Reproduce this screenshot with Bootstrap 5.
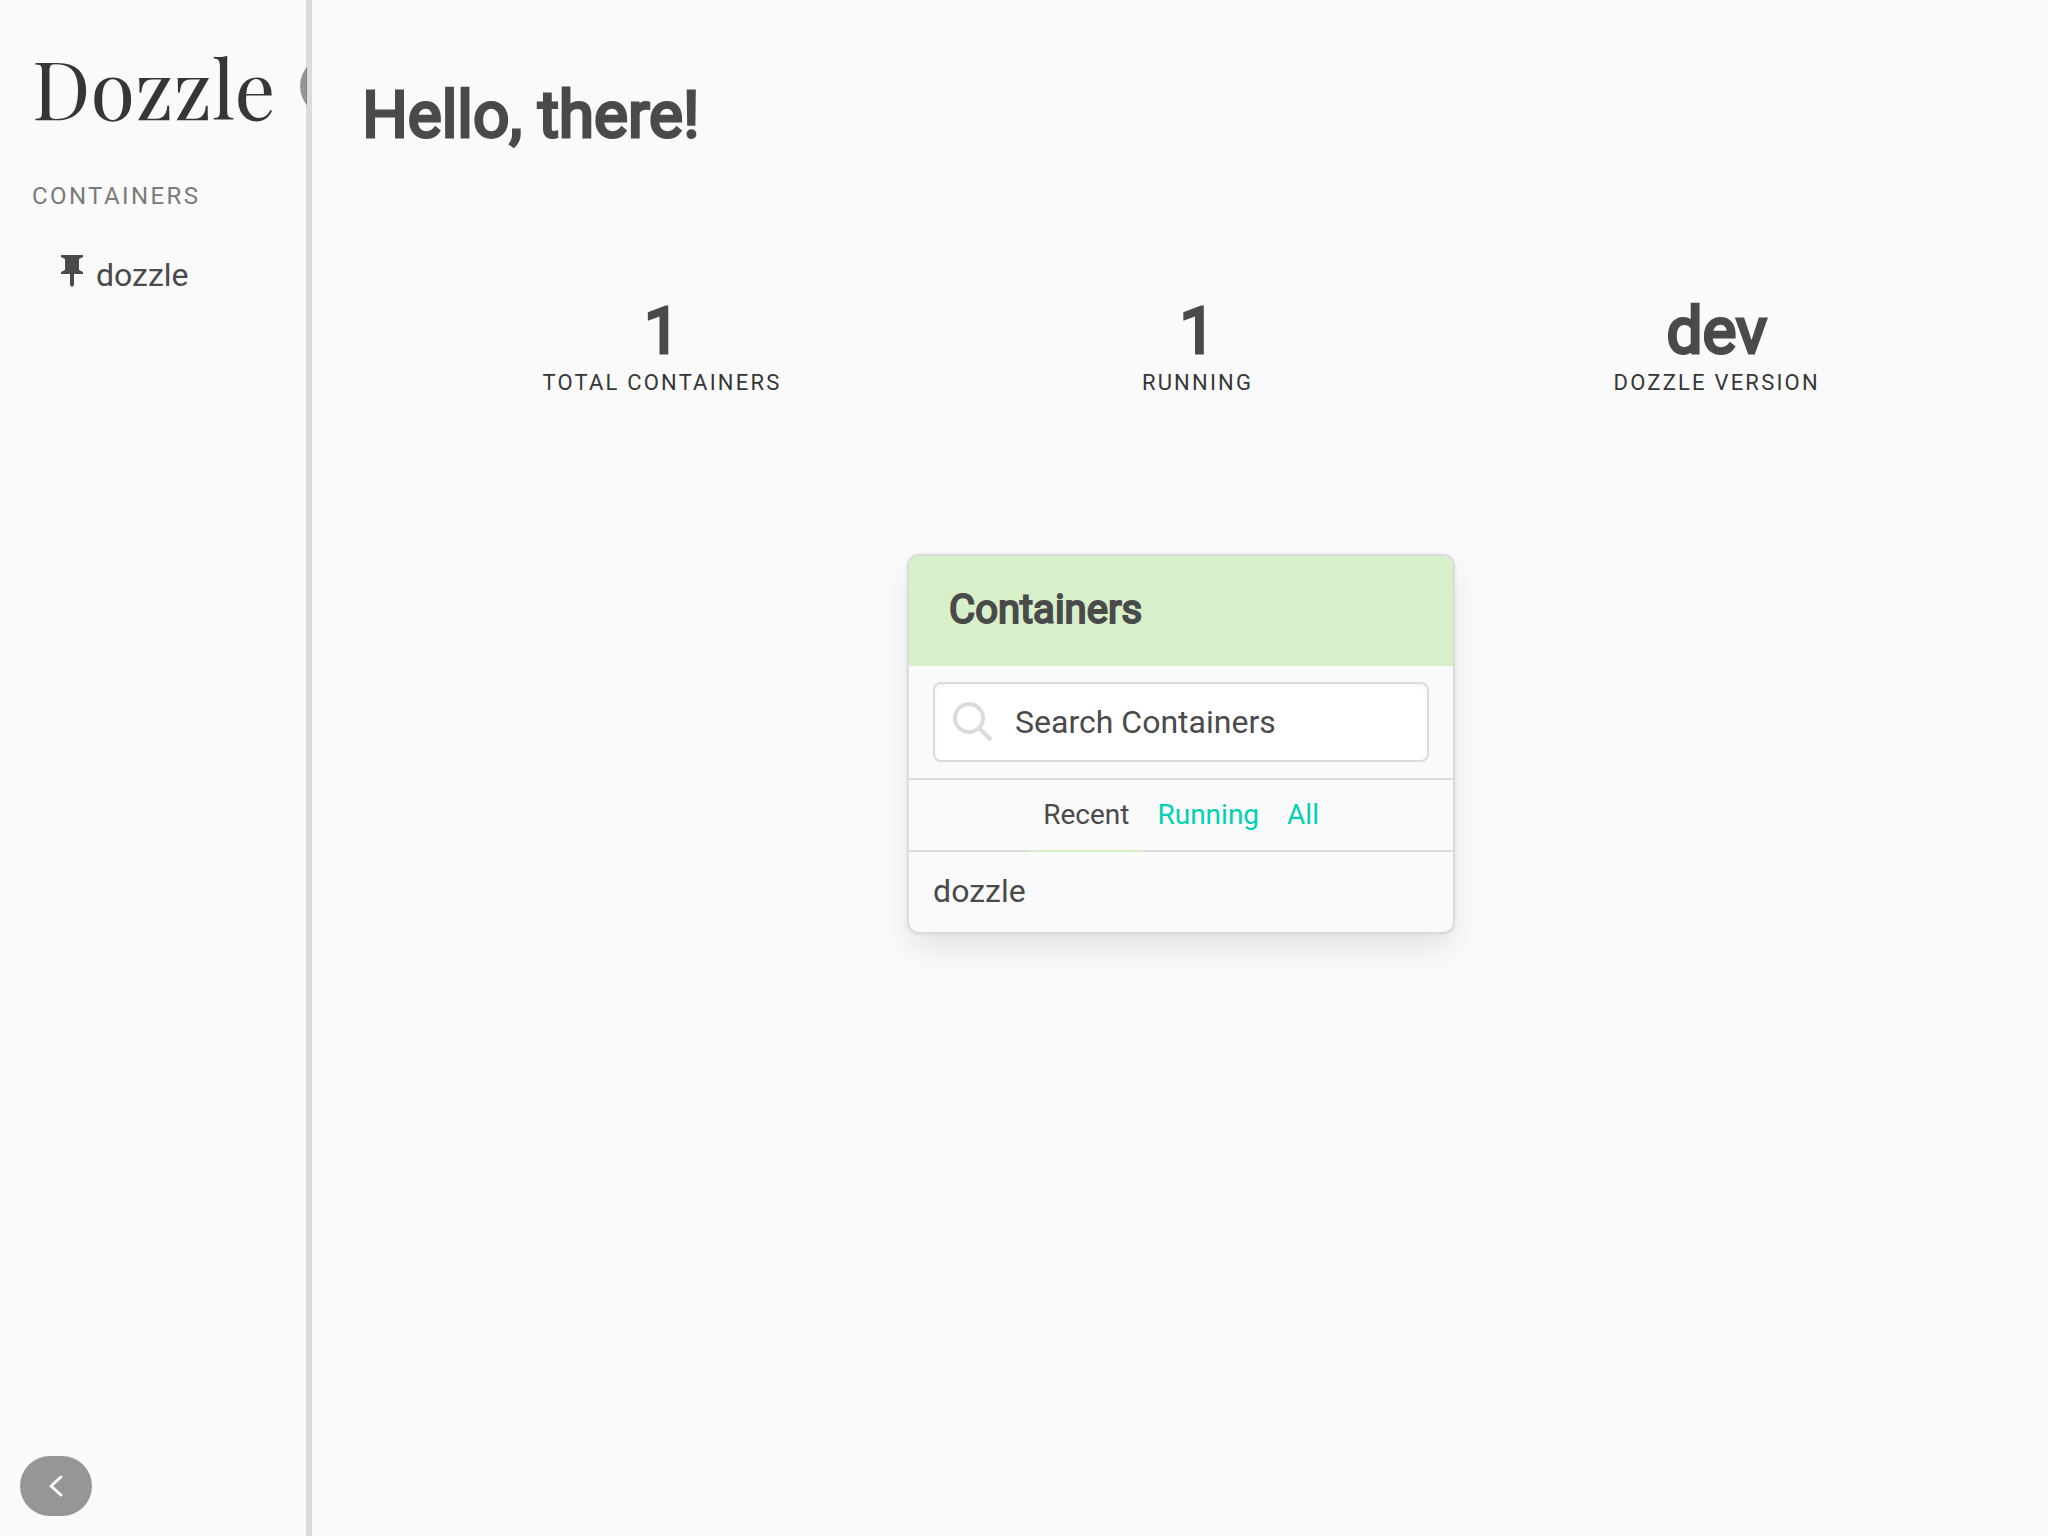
<!DOCTYPE html>
<html lang="en">
<head>
<meta charset="utf-8">
<meta name="viewport" content="width=device-width, initial-scale=1">
<title>Dozzle</title>
<link href="https://cdn.jsdelivr.net/npm/bootstrap@5.3.0/dist/css/bootstrap.min.css" rel="stylesheet">
<style>
  body { background: #fafafa; color: #4a4a4a; font: 32px/48px Roboto, "Liberation Sans", sans-serif; }
  a { color: #00d1b2; text-decoration: none; }
  .sidebar { width: 15%; padding: 32px 0 20px 32px; z-index: 1; }
  .splitter { width: 6px; margin-left: -1px; background: #dbdbdb; }
  .brand { font: 81px/108px "Playfair Display", "Liberation Serif", serif; color: #363636; width: 268px; }
  .pill { width: 72px; height: 60px; border: 0; border-radius: 30px; background: rgba(0, 0, 0, .4); color: #fff; }
  .collapse-pill { margin-left: -12px; }
  .menu-title { font-size: 24px; line-height: 32px; letter-spacing: .1em; color: #7a7a7a; margin: 40px 0 39px; }
  .menu-link { color: #4a4a4a; padding: 0 24px; }
  .content-pane { padding: 80px 48px 80px 50px; }
  .heading-lg, .heading-md { font-weight: 400; color: #4a4a4a; }
  .heading-lg { font-size: 64px; line-height: 72px; -webkit-text-stroke: 3px #4a4a4a; }
  .heading-md { font-size: 40px; line-height: 48px; -webkit-text-stroke: 2px #4a4a4a; }
  .stats { margin: 144px 0 156px; }
  .stat-label { font-size: 22px; line-height: 30px; letter-spacing: .1em; color: #363636; }
  .panel { width: 548px; background: #fafafa; border: 2px solid #dbdbdb; border-radius: 12px; box-shadow: 0 16px 32px -4px rgba(10, 10, 10, .1), 0 0 0 2px rgba(10, 10, 10, .02); }
  .panel-head { background: #d8f0ca; padding: 30px 40px 32px; border-radius: 10px 10px 0 0; }
  .panel-search { padding: 16px 24px; border-bottom: 2px solid #dbdbdb; }
  .search-box { height: 80px; padding: 0 20px 0 80px; font-size: 32px; color: #4a4a4a; border: 2px solid #dbdbdb; border-radius: 8px; box-shadow: inset 0 2px 4px rgba(10, 10, 10, .05); }
  .search-box::placeholder { color: #4a4a4a; }
  .search-icon { left: 41px; top: 34px; }
  .panel-tabs { font-size: 28px; line-height: 42px; box-shadow: inset 0 -2px #dbdbdb; }
  .panel-tabs a { padding: 14px; border-bottom: 2px solid transparent; }
  .panel-tabs a.current { color: #4a4a4a; border-color: #d8f0ca; }
  .panel-row { color: #4a4a4a; padding: 15px 24px 17px; }
</style>
</head>
<body>
<div class="d-flex vh-100">
  <aside class="sidebar d-flex flex-column flex-shrink-0 overflow-hidden position-relative">
    <div class="d-flex align-items-center">
      <h1 class="brand flex-shrink-0 mb-0">Dozzle</h1>
      <button class="pill flex-shrink-0" type="button" aria-label="Search"></button>
    </div>
    <p class="menu-title">CONTAINERS</p>
    <nav>
      <a class="menu-link d-flex align-items-center" href="#">
        <svg class="mb-2" width="40" height="40" viewBox="0 0 40 40" fill="#4a4a4a" aria-hidden="true"><path d="M5 4h22v2l-4 2v11l4 2v2H18v11l-2 2-2-2V23H5v-2l4-2V8L5 6z"/></svg>
        <span>dozzle</span>
      </a>
    </nav>
    <button class="pill collapse-pill mt-auto d-flex align-items-center justify-content-center" type="button" aria-label="Hide sidebar">
      <svg width="24" height="24" viewBox="0 0 24 24" fill="none" stroke="#fff" stroke-width="3" stroke-linecap="round" stroke-linejoin="round" aria-hidden="true"><path d="M17 3L7 12l10 9"/></svg>
    </button>
  </aside>
  <div class="splitter flex-shrink-0"></div>
  <main class="content-pane flex-grow-1">
    <h2 class="heading-lg mb-0">Hello, there!</h2>
    <section class="stats d-flex text-center">
      <div class="flex-fill"><div class="heading-lg">1</div><div class="stat-label">TOTAL CONTAINERS</div></div>
      <div class="flex-fill"><div class="heading-lg">1</div><div class="stat-label">RUNNING</div></div>
      <div class="flex-fill"><div class="heading-lg">dev</div><div class="stat-label">DOZZLE VERSION</div></div>
    </section>
    <section class="panel mx-auto">
      <div class="panel-head"><h3 class="heading-md mb-0">Containers</h3></div>
      <div class="panel-search position-relative">
        <input class="search-box form-control" type="text" placeholder="Search Containers" aria-label="Search Containers">
        <svg class="search-icon position-absolute" width="44" height="44" viewBox="0 0 44 44" fill="none" stroke="#dbdbdb" stroke-width="4" aria-hidden="true"><circle cx="19" cy="18" r="14"/><path d="M29 28l12 12"/></svg>
      </div>
      <div class="panel-tabs d-flex justify-content-center">
        <a class="current" href="#">Recent</a>
        <a href="#">Running</a>
        <a href="#">All</a>
      </div>
      <a class="panel-row d-block" href="#">dozzle</a>
    </section>
  </main>
</div>
<script src="https://cdn.jsdelivr.net/npm/bootstrap@5.3.0/dist/js/bootstrap.bundle.min.js"></script>
</body>
</html>
